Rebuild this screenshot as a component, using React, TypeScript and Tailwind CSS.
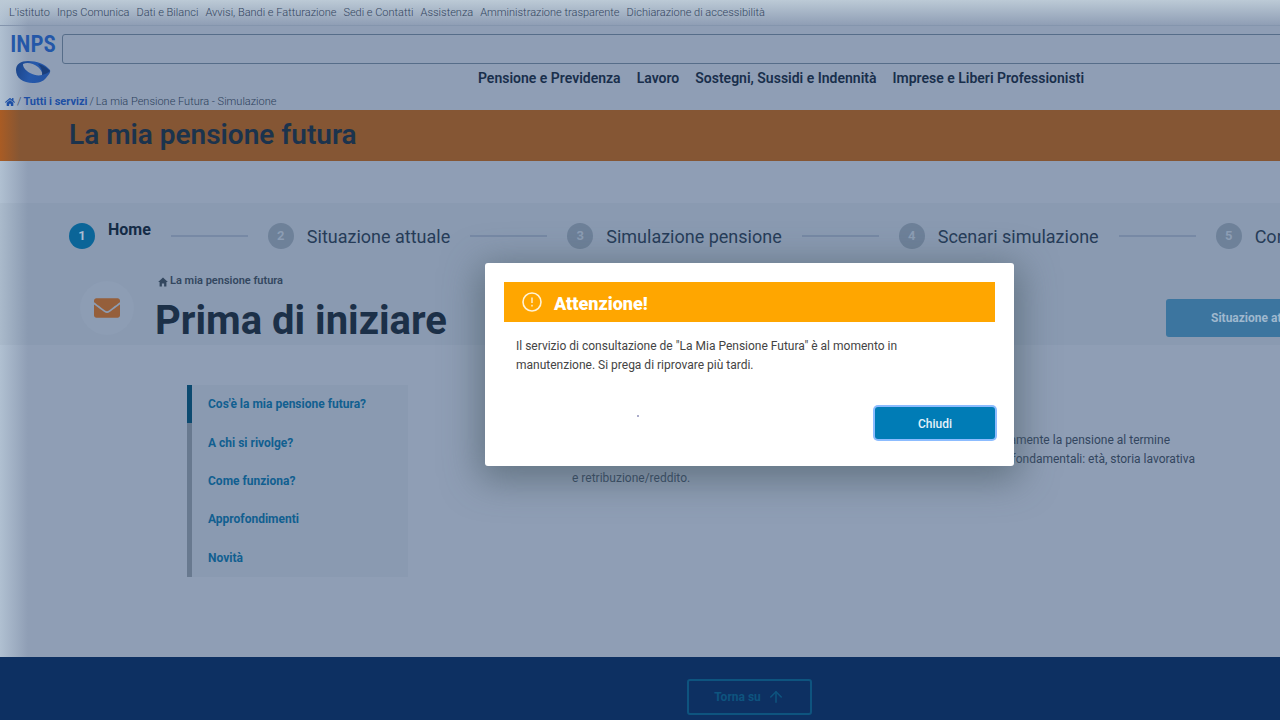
import React from 'react';
import { FaHome, FaEnvelope } from 'react-icons/fa';
import { IoMdHome } from 'react-icons/io';
import { ArrowUp } from 'lucide-react';

const utilityLinks = [
  "L'istituto",
  'Inps Comunica',
  'Dati e Bilanci',
  'Avvisi, Bandi e Fatturazione',
  'Sedi e Contatti',
  'Assistenza',
  'Amministrazione trasparente',
  'Dichiarazione di accessibilità',
];

const mainLinks = [
  'Pensione e Previdenza',
  'Lavoro',
  'Sostegni, Sussidi e Indennità',
  'Imprese e Liberi Professionisti',
];

const steps = ['Home', 'Situazione attuale', 'Simulazione pensione', 'Scenari simulazione', 'Confronto'];

const sections = [
  "Cos'è la mia pensione futura?",
  'A chi si rivolge?',
  'Come funziona?',
  'Approfondimenti',
  'Novità',
];

function Logo() {
  return (
    <a href="#" aria-label="INPS" className="flex w-11 shrink-0 flex-col items-center text-[#2457a8]">
      <span className="h-[30px] font-['Roboto_Condensed','Liberation_Sans_Narrow','Roboto',sans-serif] text-[23px] leading-[30px] font-semibold">
        INPS
      </span>
      <svg viewBox="0 0 36 24" className="h-6 w-9" aria-hidden="true">
        <defs>
          <linearGradient id="ring" x1="0" x2="1" y1="0.4" y2="0.6">
            <stop offset="0" stopColor="#1d478c" />
            <stop offset="0.45" stopColor="#2659ab" />
            <stop offset="1" stopColor="#2353a2" />
          </linearGradient>
        </defs>
        <path
          d="M1 10C1 4 6 1 13 1c9 0 17 3 22 9 1 3-2 5-4 8-3 4-8 5-13 5C8 23 1 18 1 10ZM8 4c0 3 2 6 7 9 4 2 8 3 12 2 1-2-1-5-4-8C18 3 12 2 8 4Z"
          fill="url(#ring)"
          fillRule="evenodd"
        />
        <path d="M23 4c5 1 9 4 12 7-2 2-5 3-8 4 1-4-1-8-4-11Z" fill="#1a3f7c" />
      </svg>
    </a>
  );
}

function Stepper() {
  return (
    <ol className="flex h-[66px] items-center pl-[69px] whitespace-nowrap">
      {steps.map((label, i) => (
        <li key={label} className="flex shrink-0 items-center">
          {i > 0 && <span className="mx-5 h-0.5 w-[77px] bg-[#7789a5]" />}
          <span
            className={
              i === 0
                ? 'flex size-[26px] items-center justify-center rounded-full bg-[#0b6598] text-[13px] font-bold text-[#a9bdd3]'
                : 'flex size-[26px] items-center justify-center rounded-full bg-[#6e8199] text-[13px] font-bold text-[#8c9db4]'
            }
          >
            {i + 1}
          </span>
          <span
            className={
              i === 0
                ? 'ml-[13px] pb-3 text-base font-bold text-[#142b46]'
                : 'ml-[13px] text-[18px] text-[#263c58]'
            }
          >
            {label}
          </span>
        </li>
      ))}
    </ol>
  );
}

function Dialog() {
  return (
    <div className="absolute inset-0 flex items-start justify-center pt-[263px] pl-[219px]">
      <div
        role="alertdialog"
        aria-labelledby="dialog-title"
        className="flex w-[529px] flex-col rounded-[3px] bg-white px-[19px] pt-[19px] pb-[27px] shadow-[0_8px_36px_6px_rgba(70,88,98,0.6)]"
      >
        <div className="flex h-10 items-center gap-3 bg-[#ffa600] pl-[18px] text-white">
          <svg viewBox="0 0 20 20" className="size-5" fill="none" stroke="#fff3d6" aria-hidden="true">
            <circle cx="10" cy="10" r="9" strokeWidth="1.6" />
            <path d="M10 5.5v5.5M10 12.8v1.6" strokeWidth="1.4" />
          </svg>
          <h2 id="dialog-title" className="pt-0.5 text-[18px] font-black">
            Attenzione!
          </h2>
        </div>
        <p className="mt-[15px] px-3 text-[12px] leading-[19px] text-[#444444]">
          Il servizio di consultazione de "La Mia Pensione Futura" è al momento in
          <br />
          manutenzione. Si prega di riprovare più tardi.
        </p>
        <div className="mt-8 flex items-start justify-between pl-[133px]">
          <span className="mt-2 size-0.5 rounded-full bg-[#8f90b8]" />
          <button className="h-8 w-[120px] rounded-[3px] bg-[#007cb6] pt-0.5 text-[12px] font-medium text-[#e4f2fa] ring-2 ring-[#8cbcff]">
            Chiudi
          </button>
        </div>
      </div>
    </div>
  );
}

export default function App() {
  return (
    <div className="relative flex min-h-screen flex-col overflow-hidden bg-[linear-gradient(to_right,#b0c0d1,#8f9eb5_28px)] font-['Roboto',sans-serif]">
      <nav className="flex h-[26px] items-center gap-[7px] border-b border-[#8495ad] bg-linear-to-b from-[#bccad6] to-[#bccad6]/0 pt-0.5 pl-[9px] text-[11px] font-light whitespace-nowrap text-[#33455f]">
        {utilityLinks.map((l) => (
          <a key={l} href="#">
            {l}
          </a>
        ))}
      </nav>

      <header className="flex h-[66px] items-start gap-[7px] overflow-hidden pl-[11px]">
        <div className="pt-1">
          <Logo />
        </div>
        <div className="flex min-w-0 flex-1 flex-col pt-2">
          <input
            aria-label="Cerca"
            type="search"
            className="-mr-1 h-[30px] self-stretch rounded-[3px] border border-[#566d89] bg-transparent px-3 text-sm"
          />
          <nav className="flex h-7 items-center justify-center gap-4 pt-px pl-[220px] text-[14px] font-semibold whitespace-nowrap text-[#192f4c]">
            {mainLinks.map((l) => (
              <a key={l} href="#">
                {l}
              </a>
            ))}
          </nav>
        </div>
      </header>

      <nav aria-label="Percorso" className="flex h-[18px] items-center gap-0.5 pt-0.5 pl-[5px] text-[11px] font-light text-[#2c405b]">
        <a href="#" aria-label="Home" className="text-[#1d4fa4]">
          <FaHome size={10} />
        </a>
        <span>/</span>
        <a href="#" className="font-bold text-[#1d4fa4]">
          Tutti i servizi
        </a>
        <span>/</span>
        <span>La mia Pensione Futura - Simulazione</span>
      </nav>

      <div className="flex h-[51px] items-center bg-[linear-gradient(to_right,#a95c24,#855634_20px)] pb-0.5 pl-[69px]">
        <h1 className="text-[28px] font-semibold text-[#1b334d]">La mia pensione futura</h1>
      </div>

      <section className="mt-[42px] h-[142px] overflow-hidden bg-[linear-gradient(to_right,#aabacb,#8a9ab1_28px)]">
        <Stepper />
        <div className="flex items-start pl-20">
          <span className="mt-3 flex size-[54px] items-center justify-center rounded-full bg-[#8d9db4]">
            <FaEnvelope size={26} color="#955f3b" />
          </span>
          <div className="ml-[21px]">
            <a href="#" className="flex h-6 items-center gap-px pt-px pl-0.5 text-[11px] font-semibold text-[#33475f]">
              <IoMdHome size={12} />
              La mia pensione futura
            </a>
            <h2 className="pt-px text-[40px] leading-[54px] font-bold text-[#1c3048]">Prima di iniziare</h2>
          </div>
          <button className="mt-[30px] -mr-10 ml-auto h-[38px] w-[154px] rounded-[3px] bg-[#3c759f] pl-[45px] text-left text-[12px] font-bold whitespace-nowrap text-[#9fb8ce]">
            Situazione attuale
          </button>
        </div>
      </section>

      <main className="flex flex-1 items-start pt-10 pb-20 pl-[187px]">
        <nav aria-label="Sezioni" className="flex h-48 w-[221px] flex-col bg-[#8a9ab1] text-[12px] font-bold text-[#115f90]">
          {sections.map((s, i) => (
            <a
              key={s}
              href="#"
              className={
                i === 0
                  ? 'flex flex-1 items-center border-l-[5px] border-[#0c4a70] pl-4'
                  : 'flex flex-1 items-center border-l-[5px] border-[#68798f] pl-4'
              }
            >
              {s}
            </a>
          ))}
        </nav>
        <p className="ml-[164px] flex w-[623px] flex-col pt-[46px] text-[12px] leading-[19px] text-[#33465f]">
          <span className="pr-[25px] text-right">gratuitamente la pensione al termine</span>
          <span className="text-right">fondamentali: età, storia lavorativa</span>
          <span>e retribuzione/reddito.</span>
        </p>
      </main>

      <footer className="flex h-[63px] items-center justify-center bg-[#0d3062] pt-4 pl-[219px]">
        <button className="flex h-9 w-[125px] items-center justify-center gap-1.5 rounded-[3px] border-2 border-[#0e547f] text-[12px] font-bold text-[#0e547f]">
          Torna su
          <ArrowUp size={18} />
        </button>
      </footer>

      <Dialog />
    </div>
  );
}
